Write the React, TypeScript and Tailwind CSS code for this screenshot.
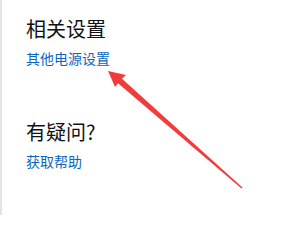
export default function App() {
  return (
    <div className="relative h-[228px] w-[297px] overflow-hidden bg-white font-['Noto_Sans_CJK_SC',sans-serif]">
      <div className="flex">
        <div className="h-[215px] w-[2px] bg-[#e3e3e3]" />
        <div className="pl-[24px] pt-[15px]">
          <h2 className="text-[20px] leading-[28px] text-[#111]">相关设置</h2>
          <a className="mt-[5px] block text-[14px] leading-[20px] text-[#0a66c2]">其他电源设置</a>
          <h2 className="mt-[50px] text-[20px] leading-[28px] text-[#111]">有疑问?</h2>
          <a className="mt-[5px] block text-[14px] leading-[20px] text-[#0a66c2]">获取帮助</a>
        </div>
      </div>
      <svg className="absolute left-0 top-0" width="297" height="228" viewBox="0 0 297 228">
        <polygon
          points="108,71 126,75 122,78.7 242.5,187.4 241.5,188.6 118,83.3 115,87"
          fill="#f23c3c"
        />
      </svg>
    </div>
  );
}
